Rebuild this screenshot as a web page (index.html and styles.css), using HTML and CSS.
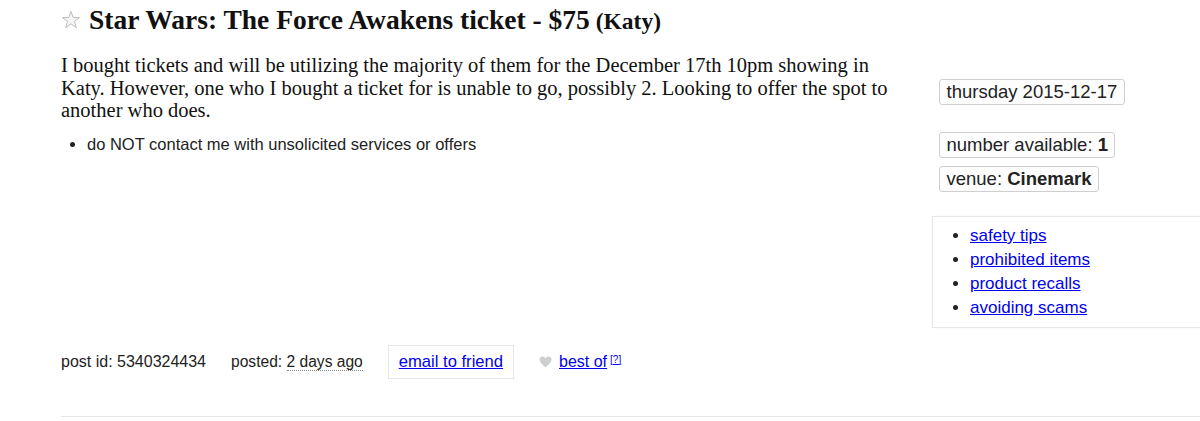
FILE: index.html
```html
<!DOCTYPE html>
<html lang="en">
<head>
<meta charset="utf-8">
<title>Star Wars: The Force Awakens ticket - $75 (Katy)</title>
<link rel="stylesheet" href="styles.css">
</head>
<body>
<section class="page">
  <h2 class="posting-title">
    <svg class="star" width="20" height="20" viewBox="0 0 20 20" aria-hidden="true"><polygon points="10,1.5 12.2,7.6 18.6,7.6 13.4,11.4 15.4,17.6 10,13.8 4.6,17.6 6.6,11.4 1.4,7.6 7.8,7.6" fill="#f6f6f6" stroke="#bdbdbd" stroke-width="1"/></svg>
    <span class="title-text">Star Wars: The Force Awakens ticket - <span class="price">$75</span><small class="loc"> (Katy)</small></span>
  </h2>
  <div class="content">
    <div class="main">
      <p class="posting-body">I bought tickets and will be utilizing the majority of them for the December 17th 10pm showing in Katy. However, one who I bought a ticket for is unable to go, possibly 2. Looking to offer the spot to another who does.</p>
      <ul class="notices">
        <li>do NOT contact me with unsolicited services or offers</li>
      </ul>
    </div>
    <aside class="side">
      <div class="attrgroup first"><span class="attr">thursday 2015-12-17</span></div>
      <div class="attrgroup">
        <span class="attr">number available: <b>1</b></span>
        <span class="attr">venue: <b>Cinemark</b></span>
      </div>
      <ul class="safety">
        <li><a href="#">safety tips</a></li>
        <li><a href="#">prohibited items</a></li>
        <li><a href="#">product recalls</a></li>
        <li><a href="#">avoiding scams</a></li>
      </ul>
    </aside>
  </div>
  <div class="postinfos">
    <span class="info">post id: 5340324434</span>
    <span class="info posted">posted: <time class="ago">2 days ago</time></span>
    <span class="email-box"><a href="#">email to friend</a></span>
    <span class="bestof">
      <svg class="heart" width="13" height="12" viewBox="0 0 13 12" aria-hidden="true"><path d="M6.5 11.5 C2.5 8 0.5 6 0.5 3.6 C0.5 1.8 1.9 0.5 3.5 0.5 C4.8 0.5 5.9 1.3 6.5 2.4 C7.1 1.3 8.2 0.5 9.5 0.5 C11.1 0.5 12.5 1.8 12.5 3.6 C12.5 6 10.5 8 6.5 11.5 Z" fill="#cfcfcf"/></svg>
      <a href="#">best of</a><sup><a href="#" class="help">[?]</a></sup>
    </span>
  </div>
  <div class="rule"></div>
</section>
</body>
</html>
```
FILE: styles.css
```css
html, body {
  margin: 0;
  padding: 0;
  background: #fff;
  overflow: hidden;
}
body {
  color: #222;
  font-family: "Liberation Sans", Arial, sans-serif;
}
a {
  color: #0000ee;
}
.page {
  padding-left: 61px;
  width: 1200px;
  box-sizing: border-box;
}
.posting-title {
  margin: 4px 0 0;
  display: flex;
  align-items: center;
  gap: 8px;
  font-family: "Liberation Serif", "Times New Roman", serif;
  font-size: 27.5px;
  line-height: 32px;
  font-weight: bold;
  color: #111;
}
.star {
  flex: none;
  margin-top: -2px;
}
.loc {
  font-size: 23.5px;
}
.content {
  display: flex;
  margin-top: 17px;
}
.main {
  width: 845px;
  flex: none;
  margin-right: 26px;
}
.posting-body {
  margin: 0;
  font-family: "Liberation Serif", "Times New Roman", serif;
  font-size: 20.5px;
  line-height: 22.5px;
  color: #111;
}
.notices {
  margin: 12px 0 0;
  padding-left: 26px;
  font-size: 16.5px;
  line-height: 20px;
}
.side {
  flex: none;
  width: 300px;
  padding-top: 25px;
}
.attrgroup {
  display: flex;
  flex-direction: column;
  align-items: flex-start;
  gap: 8px;
  margin-left: 7px;
}
.attrgroup.first {
  margin-bottom: 27px;
}
.attr {
  display: inline-block;
  border: 1px solid #cfcfcf;
  border-radius: 3px;
  background: #fdfdfd;
  padding: 0 6.5px;
  font-size: 18.5px;
  line-height: 24px;
  color: #222;
}
.attr b {
  font-weight: bold;
}
.safety {
  margin: 24px 0 0;
  padding: 7px 0 7px 37px;
  border: 1px solid #e8e8e8;
  box-shadow: 0 0 2px #f2f2f2;
  list-style: disc;
  font-size: 17px;
  line-height: 24px;
}
.postinfos {
  display: flex;
  align-items: center;
  gap: 25px;
  margin-top: 17px;
  font-size: 16px;
  height: 34px;
}
.posted {
  font-size: 15.6px;
}
.ago {
  border-bottom: 1px dotted #888;
}
.email-box {
  display: inline-block;
  border: 1px solid #e6e6e6;
  padding: 0 10px;
  line-height: 32px;
  font-size: 16.6px;
}
.bestof {
  display: flex;
  align-items: center;
  font-size: 16px;
}
.heart {
  margin-right: 7px;
}
.bestof sup {
  font-size: 10px;
  margin-left: 3px;
  position: relative;
  top: -3px;
}
.rule {
  margin-top: 37px;
  border-top: 1px solid #e6e6e6;
  height: 6px;
}
```
